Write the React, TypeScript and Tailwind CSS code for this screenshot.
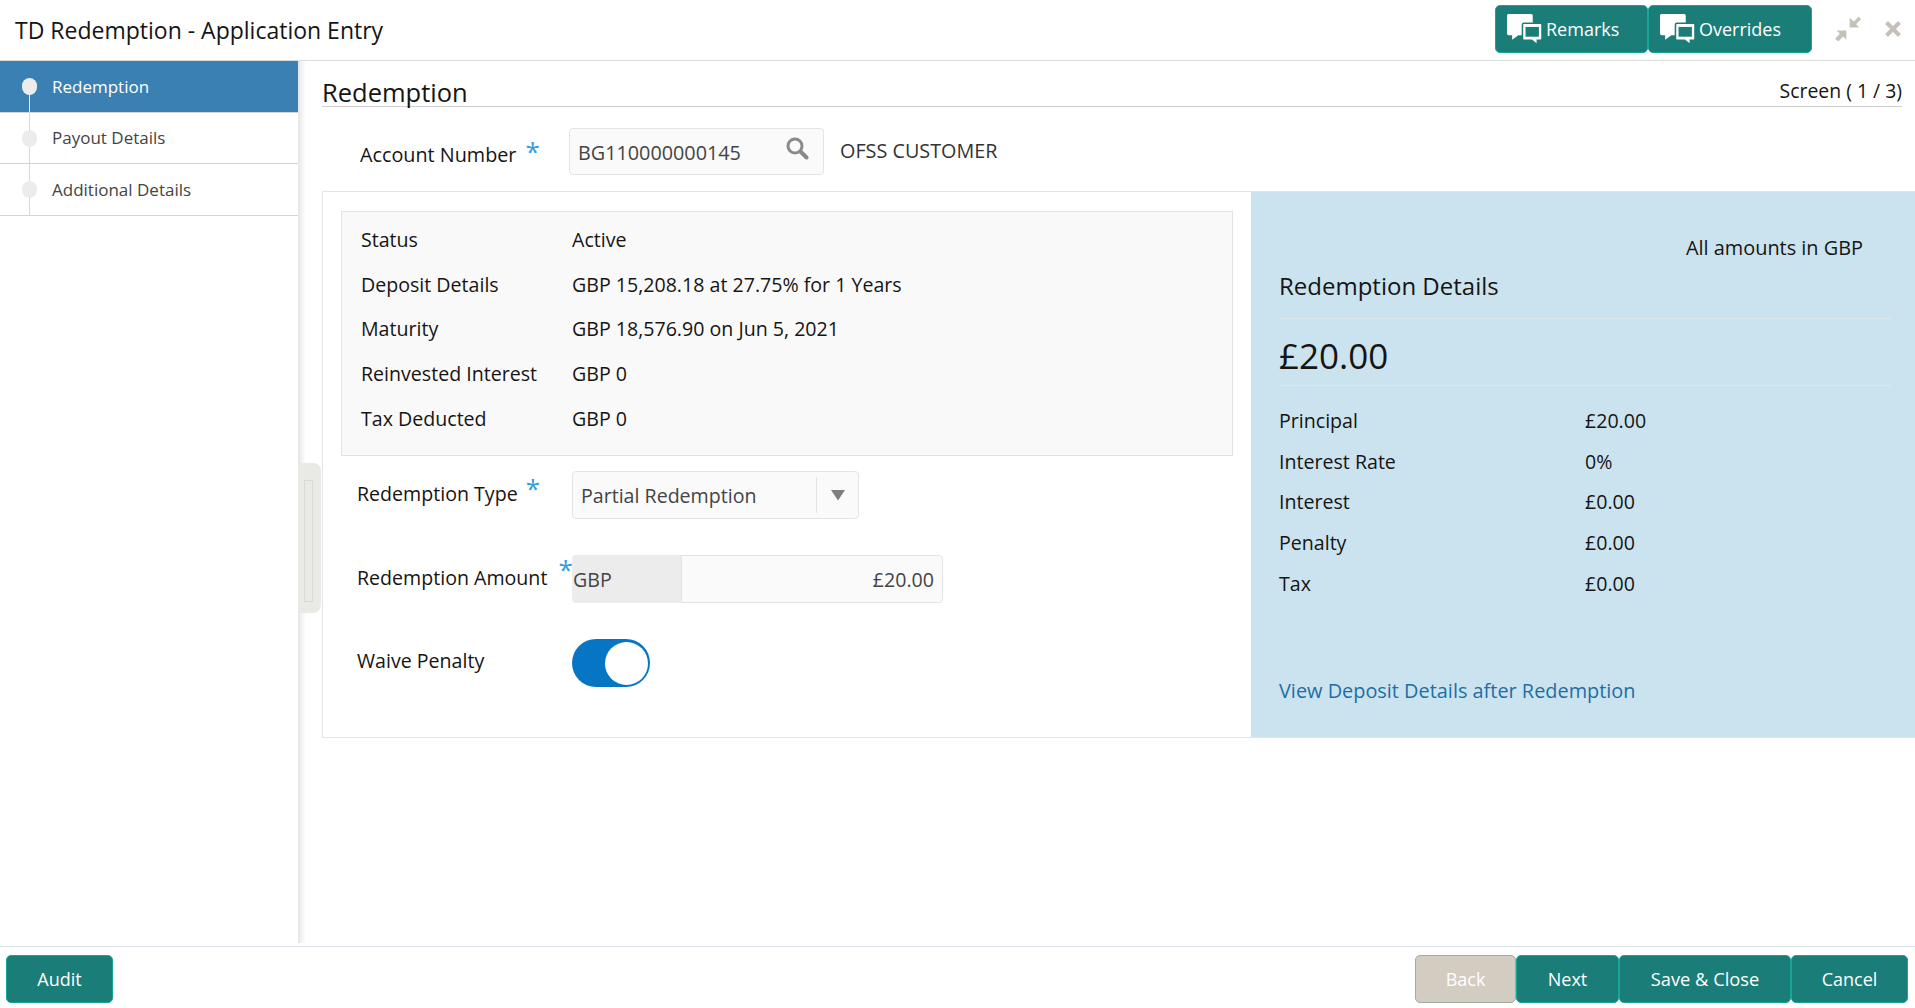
import React from "react";

function Chat() {
  return (
    <svg width="35" height="31" viewBox="0 0 34 30" className="shrink-0">
      <path d="M0 1.500A1.500 1.500 0 0 1 1.500 0H23.500A1.500 1.500 0 0 1 25 1.500V19A1.500 1.500 0 0 1 23.500 20.500H11L5 25V20.500H1.500A1.500 1.500 0 0 1 0 19Z" fill="#fff" />
      <path d="M15 10.500A1.500 1.500 0 0 1 16.500 9H32.500A1.500 1.500 0 0 1 34 10.500V24A1.500 1.500 0 0 1 32.500 25.500H29.500V30L24 25.500H16.500A1.500 1.500 0 0 1 15 24Z" fill="#fff" stroke="#1b7d78" strokeWidth="1.500" />
      <rect x="18" y="12.500" width="13" height="9.500" fill="#1b7d78" />
    </svg>
  );
}

function Btn({ children, className = "" }: { children: React.ReactNode; className?: string }) {
  return (
    <button className={`h-[48px] flex items-center justify-center rounded-[5px] border border-[#17a596] bg-[#1b7d78] text-white text-[18px] ${className}`}>
      {children}
    </button>
  );
}

function SideItem({ label, active, first, h }: { label: string; active?: boolean; first?: boolean; h: string }) {
  return (
    <div className={`relative flex items-center pl-[52px] text-[17px] border-b border-[#d4d4d4] ${h} ${active ? "bg-[#3b80b2] text-white" : "text-[#444]"}`}>
      <span className={`absolute left-[29px] w-px ${first ? "top-[30px] bottom-0 bg-[#e8e8e8]" : "top-0 bottom-[-1px] bg-[#d8d8d8]"}`} />
      <span className="absolute left-[22px] top-[17px] h-[17px] w-[15px] rounded-full bg-[#ececec]" />
      {label}
    </div>
  );
}

function Required({ className = "" }: { className?: string }) {
  return <span className={`text-[26px] leading-none text-[#2f9fdc] ${className}`}>*</span>;
}

function InfoRow({ label, value }: { label: string; value: string }) {
  return (
    <div className="flex h-[44.800px] items-center">
      <span className="w-[211px] shrink-0">{label}</span>
      <span>{value}</span>
    </div>
  );
}

function PriceRow({ label, value }: { label: string; value: string }) {
  return (
    <div className="flex h-[40.800px] items-center">
      <span className="w-[306px] shrink-0">{label}</span>
      <span>{value}</span>
    </div>
  );
}

export default function App() {
  return (
    <div className="flex h-[1008px] w-[1915px] flex-col overflow-hidden bg-white font-['Open_Sans','Noto_Sans',sans-serif] text-[#161513]">
      <header className="flex h-[61px] shrink-0 items-start border-b border-[#dcdcdc]">
        <h1 className="ml-[15px] mt-[12px] text-[23px] leading-[36px] text-[#161513]">TD Redemption - Application Entry</h1>
        <div className="ml-auto mt-[5px] flex">
          <Btn className="w-[153px] !justify-start gap-[4px] pl-[11px]"><Chat />Remarks</Btn>
          <Btn className="w-[164px] !justify-start gap-[4px] pl-[11px]"><Chat />Overrides</Btn>
        </div>
        <div className="ml-[22px] mr-[13px] mt-[15px] flex items-center gap-[22px]">
          <svg width="28" height="28" viewBox="0 0 26 26">
            <path d="M14.500 2.500v9h9l-3-3 4.500-4.500L23 1.500 18.500 6ZM11.500 14.500h-9l3 3L1 22l3 2.500 4.500-4.500 3 3Z" fill="#c5c1b8" />
          </svg>
          <svg width="18" height="18" viewBox="0 0 18 18">
            <path d="M2.500 2.500 15.500 15.500M15.500 2.500 2.500 15.500" stroke="#c5c1b8" strokeWidth="4" />
          </svg>
        </div>
      </header>

      <div className="flex min-h-0 flex-1 pb-[3px]">
        <aside className="relative w-[298px] shrink-0">
          <SideItem label="Redemption" active first h="h-[52px]" />
          <SideItem label="Payout Details" h="h-[51px]" />
          <SideItem label="Additional Details" h="h-[52px]" />
        </aside>
        <div className="relative w-[8px] shrink-0 bg-gradient-to-r from-[#e3e6e8] to-white">
          <div className="absolute left-0 top-[402px] h-[150px] w-[23px] rounded-r-[8px] bg-[#e9e9e6] py-[17px] pl-[6px]">
            <div className="h-[122px] w-[9px] border border-[#d9d9d5]" />
          </div>
        </div>
        <main className="min-w-0 flex-1 pl-[16px]">
          <div className="mr-[13px] flex h-[46px] items-end justify-between border-b border-[#cfcfcf]">
            <h2 className="mb-[-4px] text-[25.500px] leading-[36px]">Redemption</h2>
            <span className="mb-[-3px] text-[19.400px] leading-[36px]">Screen ( 1 / 3)</span>
          </div>
          <div className="flex h-[84px] items-start pl-[38px] pt-[21px] text-[19.800px]">
            <span className="mt-[13px] flex w-[209px] shrink-0 leading-[28px]">
              Account Number <Required className="ml-[9px] mt-[-3px]" />
            </span>
            <div className="flex h-[47px] w-[255px] items-center justify-between rounded-[4px] border border-[#e4e4e4] bg-[#fafafa] pl-[8px] pr-[14px] pt-[2px] text-[#444]">
              BG110000000145
              <svg width="24" height="24" viewBox="0 0 24 24" className="mt-[-9px]">
                <circle cx="10" cy="10" r="7" fill="none" stroke="#8a8a8a" strokeWidth="3" />
                <path d="M15.500 15.500 21.500 21.500" stroke="#8a8a8a" strokeWidth="4" strokeLinecap="round" />
              </svg>
            </div>
            <span className="ml-[16px] mt-[9px] leading-[28px] text-[#333]">OFSS CUSTOMER</span>
          </div>

          <section className="flex h-[547px] border border-[#e4e4e4] border-r-0 text-[19.600px]">
            <div className="w-[928px] shrink-0 pl-[18px] pt-[19px]">
              <div className="h-[245px] w-[892px] border border-[#e2e2e2] bg-[#f9f9f9] pl-[19px] pt-[5px]">
                <InfoRow label="Status" value="Active" />
                <InfoRow label="Deposit Details" value="GBP 15,208.18 at 27.75% for 1 Years" />
                <InfoRow label="Maturity" value="GBP 18,576.90 on Jun 5, 2021" />
                <InfoRow label="Reinvested Interest" value="GBP 0" />
                <InfoRow label="Tax Deducted" value="GBP 0" />
              </div>
              <div className="mt-[15px] flex h-[48px] items-center pl-[16px]">
                <span className="flex w-[215px] shrink-0 pb-[2px]">
                  Redemption Type <Required className="ml-[8px] mt-[-4px]" />
                </span>
                <div className="flex h-[48px] w-[287px] items-center rounded-[4px] border border-[#e4e4e4] bg-[#fafafa] pl-[8px] text-[#444]">
                  <span className="flex-1 pt-[2px]">Partial Redemption</span>
                  <span className="flex h-[36px] w-[42px] items-center justify-center border-l border-[#e4e4e4]">
                    <svg width="14" height="11" viewBox="0 0 14 11"><path d="M0 0H14L7 10.500Z" fill="#7f7f7f" /></svg>
                  </span>
                </div>
              </div>
              <div className="mt-[36px] flex h-[48px] items-center pl-[16px]">
                <span className="flex w-[215px] shrink-0 whitespace-nowrap pb-[2px]">
                  Redemption Amount <Required className="ml-[11px] mt-[-7px]" />
                </span>
                <div className="flex h-[48px] w-[109px] items-center rounded-l-[4px] bg-[#ececec] pl-[1px] pt-[2px] text-[#444]">GBP</div>
                <div className="flex h-[48px] w-[262px] items-center justify-end rounded-r-[4px] border border-[#e4e4e4] bg-[#fafafa] pr-[8px] pt-[2px] text-[#444]">£20.00</div>
              </div>
              <div className="mt-[36px] flex h-[48px] items-center pl-[16px]">
                <span className="w-[215px] shrink-0 pb-[5px]">Waive Penalty</span>
                <span className="flex h-[48px] w-[78px] items-center justify-end rounded-full bg-[#0676c4] pr-[2px]">
                  <span className="h-[43px] w-[43px] rounded-full bg-white" />
                </span>
              </div>
            </div>
            <div className="min-w-0 flex-1 bg-[#cbe3ef] pl-[28px] pr-[24px]">
              <div className="pr-[28px] pt-[41px] text-right text-[19.900px] leading-[30px]">All amounts in GBP</div>
              <div className="mt-[6px] flex h-[50px] items-center border-b border-[#dde9ef] pb-[16px] text-[24px]">Redemption Details</div>
              <div className="flex h-[67px] items-center border-b border-[#dde9ef] pt-[9px] text-[35px]">£20.00</div>
              <div className="pt-[14px]">
                <PriceRow label="Principal" value="£20.00" />
                <PriceRow label="Interest Rate" value="0%" />
                <PriceRow label="Interest" value="£0.00" />
                <PriceRow label="Penalty" value="£0.00" />
                <PriceRow label="Tax" value="£0.00" />
              </div>
              <a className="mt-[72px] block text-[19.900px] leading-[30px] text-[#1d6ea5]">View Deposit Details after Redemption</a>
            </div>
          </section>
        </main>
      </div>

      <footer className="flex h-[62px] shrink-0 items-start border-t border-[#dde3e8] pl-[6px] pr-[7px] pt-[8px]">
        <Btn className="w-[107px]">Audit</Btn>
        <div className="ml-auto flex">
          <Btn className="w-[101px] !border-[#a8a8a4] !bg-[#d3ccc1] text-[#f4f2ee]">Back</Btn>
          <Btn className="w-[103px]">Next</Btn>
          <Btn className="w-[172px] !text-[18.300px]">Save &amp; Close</Btn>
          <Btn className="w-[117px]">Cancel</Btn>
        </div>
      </footer>
    </div>
  );
}
